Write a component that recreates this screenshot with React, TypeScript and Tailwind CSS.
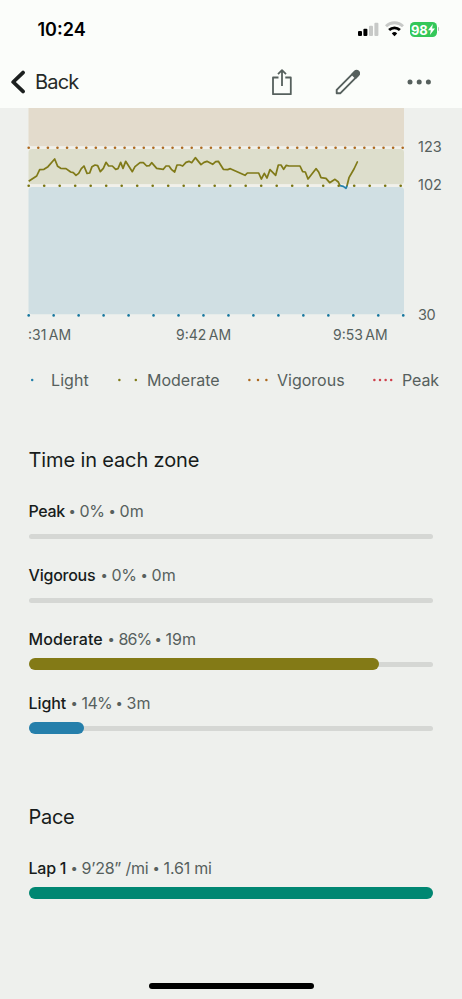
import React from "react";

const moderateLine =
  "26,244 50,228 59,209 72,208 84,200 104,177 113,199 122,205 138,206 152,216 160,218 168,226 176,220 184,206 192,198 201,220 209,219 216,200 225,195 233,197 241,215 250,205 258,187 266,198 277,198 287,208 294,206 302,187 309,205 317,184 337,215 345,200 360,188 370,188 380,198 388,197 395,188 410,205 430,208 438,198 447,198 454,208 464,216 471,195 480,195 488,198 498,187 507,184 515,188 526,173 543,194 552,187 561,184 578,193 587,185 595,184 610,208 623,209 631,206 675,226 682,219 716,219 724,237 733,220 741,234 750,209 767,226 775,195 783,195 791,208 799,196 807,198 840,198 848,215 856,216 864,237 888,206 896,216 903,233 918,235 929,248 945,238 955,246 960,257";

function Dots({ count, step, y, color }: { count: number; step: number; y: number; color: string }) {
  return (
    <g fill={color}>
      {Array.from({ length: count }, (_, i) => (
        <circle key={i} cx={28.7 + i * step} cy={y} r={1.3} />
      ))}
    </g>
  );
}

function Chart() {
  return (
    <svg className="block h-[212px] w-[410px] shrink-0" viewBox="0 108 410 212">
      <rect x="28.5" y="100" width="375.5" height="46.2" rx="3.5" fill="#e3dbcc" />
      <rect x="28.5" y="149" width="375.5" height="35.2" rx="3.5" fill="#dddecc" />
      <rect x="28.5" y="187" width="375.5" height="127.3" rx="3.5" fill="#d0dfe3" />
      <path d="M29 147.7H404M29 185.7H404" stroke="#f1f0ea" strokeWidth="2.6" />
      <Dots count={40} step={9.59} y={147.7} color="#ad681d" />
      <Dots count={25} step={15.5} y={185.7} color="#78740f" />
      <Dots count={16} step={24.97} y={315.4} color="#16779f" />
      <g transform="translate(20 100) scale(.33333)" fill="none" strokeWidth="5.2" strokeLinejoin="round">
        <polyline points={moderateLine} stroke="#807a18" />
        <polyline points="981,257 987,233 1002,207 1012,186" stroke="#807a18" strokeLinecap="round" />
        <polyline points="960,257 970,259 978,265 981,257" stroke="#2380aa" />
      </g>
    </svg>
  );
}

function LegendDots({ className, color, width, xs }: { className: string; color: string; width: number; xs: number[] }) {
  return (
    <svg className={className} width={width} height="4" viewBox={`0 0 ${width} 4`} fill={color}>
      {xs.map((x) => (
        <circle key={x} cx={x} cy="2" r="1.25" />
      ))}
    </svg>
  );
}

function Bullet() {
  return <span className="w-[15px] shrink-0 text-center text-[13px]">•</span>;
}

type ZoneProps = {
  name: string;
  first: string;
  second: string;
  fill?: string;
  nameClass: string;
  firstClass: string;
  secondClass: string;
};

function Zone({ name, first, second, fill, nameClass, firstClass, secondClass }: ZoneProps) {
  return (
    <div className="h-16">
      <div className="flex h-6 items-center whitespace-nowrap text-[16px] leading-6 text-[#56605d]">
        <span className={`font-medium text-[#171c1b] ${nameClass}`}>{name}</span>
        <Bullet />
        <span className={firstClass}>{first}</span>
        <Bullet />
        <span className={secondClass}>{second}</span>
      </div>
      <div className="mt-[7px] grid h-3 items-center">
        <div className="col-start-1 row-start-1 h-[5px] rounded-full bg-[#d5d7d4]" />
        {fill && <div className={`col-start-1 row-start-1 h-3 rounded-full ${fill}`} />}
      </div>
    </div>
  );
}

export default function App() {
  return (
    <div className="flex h-[999px] w-[462px] flex-col overflow-hidden bg-[#eef0ed] font-['Inter',sans-serif] text-[#56605d]">
      <header className="h-[108px] shrink-0 bg-[#fbfdfa]">
        <div className="flex h-[58px] items-center justify-between pl-[37.5px] pr-[23px]">
          <span className="text-[18px] font-semibold text-black">10:24</span>
          <div className="flex items-center">
            <svg className="h-4 w-[21px]" viewBox="0 0 21 16">
              <rect x="0" y="10" width="4" height="5" rx="1" fill="#000" />
              <rect x="5.4" y="7.8" width="4" height="7.2" rx="1" fill="#000" />
              <rect x="11" y="4.8" width="4" height="10.2" rx="1" fill="#c7c9c7" />
              <rect x="16.4" y="1.8" width="4" height="13.2" rx="1" fill="#c7c9c7" />
            </svg>
            <svg className="ml-[6px] h-4 w-[19px]" viewBox="0 0 19 16" fill="none">
              <path d="M1 5.2a12.2 12.2 0 0 1 17 0" stroke="#c7c9c7" strokeWidth="2.8" />
              <path d="M4.1 9a7.8 7.8 0 0 1 10.8 0" stroke="#000" strokeWidth="2.8" />
              <path d="M9.5 15.2 6.8 12.4a3.9 3.9 0 0 1 5.4 0z" fill="#000" />
            </svg>
            <div className="ml-[6px] flex h-[15px] w-[27px] items-center justify-center rounded-[4.5px] bg-[#34c759] text-white">
              <span className="pt-[2px] text-[13px] font-bold leading-[15px] tracking-[-0.3px]">98</span>
              <svg className="ml-[0.5px] h-[11px] w-[7px] shrink-0" viewBox="0 0 7 11" fill="currentColor">
                <path d="M4.9 0 0 6.2h2.8L1.9 11 7 4.6H4.1z" />
              </svg>
            </div>
            <div className="ml-px h-[4px] w-[1.5px] rounded-r bg-[#b9bcb9]" />
          </div>
        </div>
        <div className="flex h-12 items-center text-[#56605d]">
          <svg className="ml-[10px] h-6 w-4" viewBox="0 0 16 24" fill="none" stroke="#1c201f" strokeWidth="3.8" strokeLinecap="round" strokeLinejoin="round">
            <path d="M13 2.6 3.2 12l9.8 9.4" />
          </svg>
          <span className="ml-[9px] w-[50px] text-[20px] tracking-[-0.8px] text-[#252a28]">Back</span>
          <svg className="ml-[187px] h-[28px] w-[20px]" viewBox="0 0 20 28" fill="none" stroke="currentColor" strokeWidth="1.8" strokeLinejoin="round">
            <path d="M6.5 9.5H1V26.2H18.8V9.5H13.3M10 18V2.4M6 6.2l4-4 4 4" />
          </svg>
          <svg className="ml-[43px] h-[26px] w-[26px]" viewBox="0 0 26 26" fill="none" stroke="currentColor" strokeWidth="1.9" strokeLinejoin="round">
            <path d="M1.7 20.8 19.8 2.7a2.4 2.4 0 0 1 3.5 3.5L5.2 24.3H1.7z" />
            <path d="m17.2 5.3 2.6-2.6a2.4 2.4 0 0 1 3.5 3.5l-2.6 2.6z" fill="currentColor" />
          </svg>
          <svg className="ml-[46px] h-[6px] w-[26px]" viewBox="0 0 26 6" fill="currentColor">
            <circle cx="3" cy="3" r="2.5" />
            <circle cx="12.2" cy="3" r="2.5" />
            <circle cx="21.4" cy="3" r="2.5" />
          </svg>
        </div>
      </header>

      <section className="flex h-[212px] shrink-0">
        <Chart />
        <div className="flex flex-col pl-[8px] text-[14.5px] leading-5">
          <span className="mt-[29px]">123</span>
          <span className="mt-[18px]">102</span>
          <span className="mt-[110px] tracking-[-0.5px]">30</span>
        </div>
      </section>

      <div className="flex h-[28px] shrink-0 items-center whitespace-nowrap pl-[28px] text-[14px] [word-spacing:-1.5px]">
        <span className="w-[148px]">:31 AM</span>
        <span className="w-[157px]">9:42 AM</span>
        <span>9:53 AM</span>
      </div>

      <div className="mt-[20px] flex h-6 shrink-0 items-center whitespace-nowrap text-[16px]">
        <LegendDots className="ml-[28px]" color="#2380aa" width={8} xs={[4.2]} />
        <span className="ml-[15px] w-[39px] tracking-[0.1px]">Light</span>
        <LegendDots className="ml-[27px]" color="#807a18" width={22} xs={[2.4, 18.8]} />
        <span className="ml-[8px] w-[74px]">Moderate</span>
        <LegendDots className="ml-[26px]" color="#ad681d" width={22} xs={[2.4, 11, 19.4]} />
        <span className="ml-[8px] w-[68px]">Vigorous</span>
        <LegendDots className="ml-[27px]" color="#cf414c" width={22} xs={[2.4, 8, 13.6, 19.2]} />
        <span className="ml-[8px] tracking-[-0.1px]">Peak</span>
      </div>

      <main className="pl-[28.6px] pr-[28.6px] pt-[53px]">
        <h2 className="h-[54px] text-[20px] leading-[30px] tracking-[-0.14px] text-[#171c1b]">Time in each zone</h2>
        <Zone name="Peak" first="0%" second="0m" nameClass="w-[36px] tracking-[-0.4px]" firstClass="w-[25px] tracking-[-0.5px]" secondClass="" />
        <Zone name="Vigorous" first="0%" second="0m" nameClass="w-[68px] tracking-[-0.25px]" firstClass="w-[25px] tracking-[-0.5px]" secondClass="" />
        <Zone name="Moderate" first="86%" second="19m" fill="w-[350px] bg-[#837a16]" nameClass="w-[75px] tracking-[0.1px]" firstClass="w-[32px] tracking-[-1px]" secondClass="" />
        <Zone name="Light" first="14%" second="3m" fill="w-[55.5px] bg-[#257fab]" nameClass="w-[38px] tracking-[-0.1px]" firstClass="w-[30px] tracking-[-0.7px]" secondClass="" />
        <h2 className="mt-[47px] h-[53.5px] text-[20px] leading-[30px] tracking-[-0.3px] text-[#171c1b]">Pace</h2>
        <Zone name="Lap 1" first="9’28” /mi" second="1.61 mi" fill="w-full bg-[#008772]" nameClass="w-[38px] tracking-[-0.3px]" firstClass="w-[67px] tracking-[-0.25px]" secondClass="tracking-[-0.2px]" />
      </main>

      <div className="mb-[10px] ml-[149px] mt-auto h-[6px] w-[165px] shrink-0 rounded-full bg-black" />
    </div>
  );
}
